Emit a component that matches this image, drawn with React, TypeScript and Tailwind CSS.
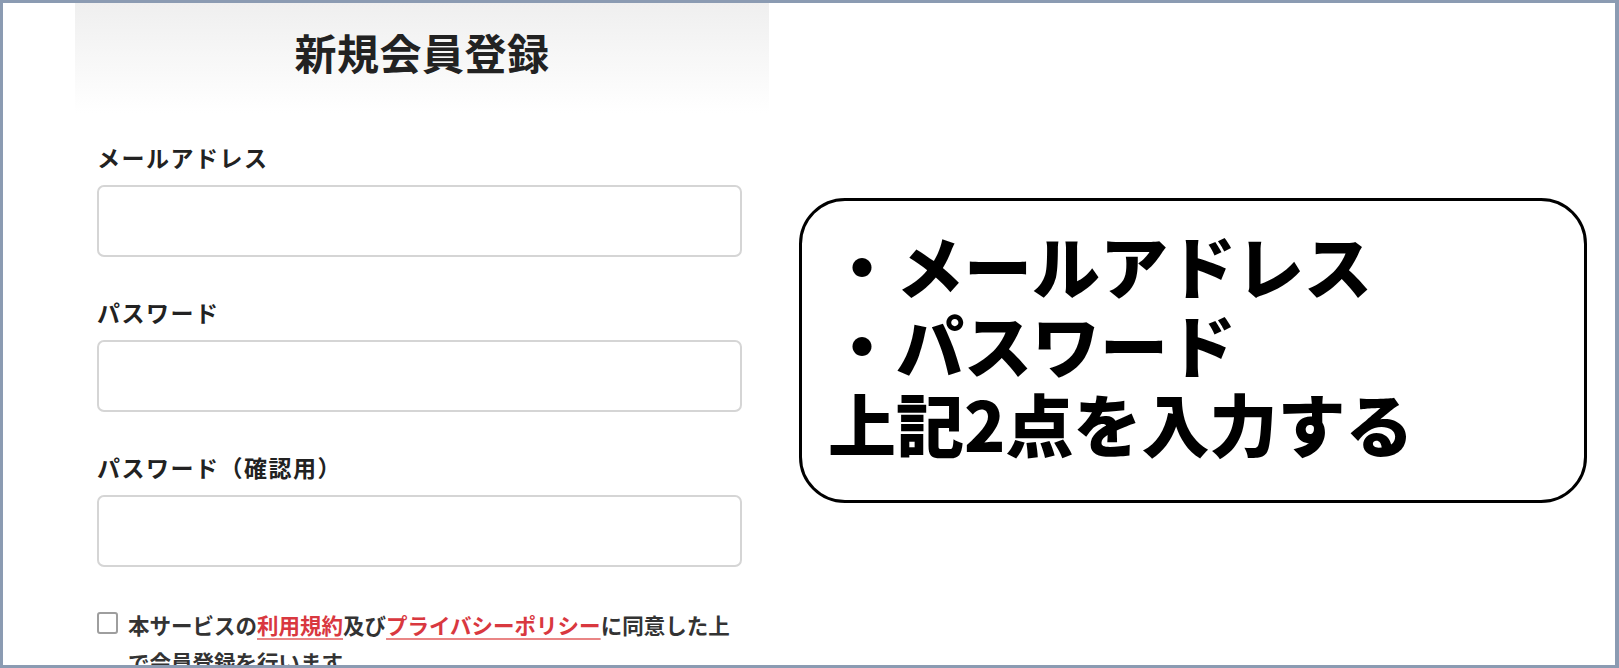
import React from "react";

const jp = { fontFamily: '"Noto Sans CJK JP", "Noto Sans", sans-serif' };

function Field({ label, first }: { label: string; first?: boolean }) {
  return (
    <div className={first ? "mt-[29px]" : "mt-[40px]"}>
      <div className="h-[30px] text-[23px] leading-[30px] font-bold tracking-[1.5px] text-[#222]">
        {label}
      </div>
      <div className="mt-[13px] h-[72px] rounded-[7px] border-2 border-[#d5d5d5] bg-white" />
    </div>
  );
}

export default function App() {
  return (
    <div
      className="w-[1619px] h-[668px] overflow-hidden bg-white border-[#8b9bb2] border-t-[3px] border-l-[3px] border-r-[4px] border-b-[3px] flex items-start"
      style={jp}
    >
      <div className="ml-[72px] w-[694px] flex flex-col shrink-0">
        <div className="h-[110px] bg-linear-to-b from-[#efefef] to-[#ffffff] flex justify-center">
          <h1 className="mt-[24px] h-[50px] text-[42px] leading-[50px] font-bold text-[#222] tracking-[0.5px]">
            新規会員登録
          </h1>
        </div>
        <div className="pl-[22px] pr-[27px]">
          <Field label="メールアドレス" first />
          <Field label="パスワード" />
          <Field label="パスワード（確認用）" />
          <div className="mt-[39px] flex items-start">
            <div className="mt-[6px] w-[21px] h-[22px] rounded-[3px] border-2 border-[#9e9e9e] bg-white shrink-0" />
            <p className="ml-[10px] text-[21.5px] leading-[37px] font-bold text-[#333] whitespace-nowrap">
              本サービスの
              <span className="text-[#d9383f] underline decoration-[#e98585] decoration-2 underline-offset-[4px]">
                利用規約
              </span>
              及び
              <span className="text-[#d9383f] underline decoration-[#e98585] decoration-2 underline-offset-[4px]">
                プライバシーポリシー
              </span>
              に同意した上
              <br />
              で会員登録を行います
            </p>
          </div>
        </div>
      </div>
      <div className="ml-[30px] mt-[195px] w-[788px] h-[305px] shrink-0 rounded-[46px] border-[3px] border-black bg-white pl-[26px] pt-[24px]">
        <div className="text-[68px] leading-[79px] font-black text-black whitespace-nowrap">
          <div>・メールアドレス</div>
          <div>・パスワード</div>
          <div>上記2点を入力する</div>
        </div>
      </div>
    </div>
  );
}
